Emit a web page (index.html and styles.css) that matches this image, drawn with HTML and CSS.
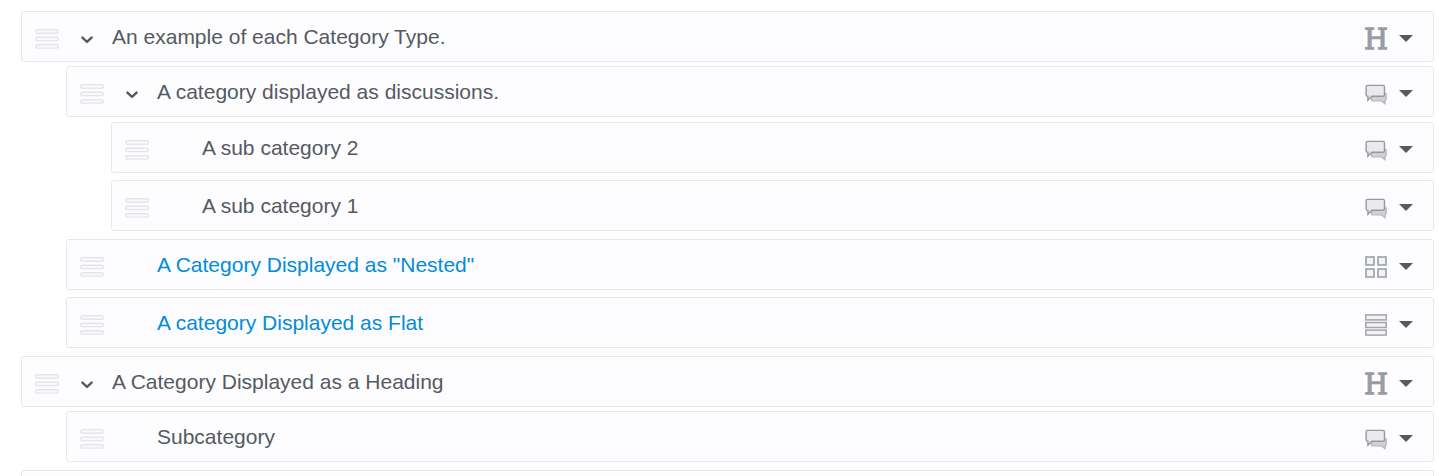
FILE: index.html
```
<!DOCTYPE html>
<html lang="en">
<head>
<meta charset="utf-8">
<title>Categories</title>
<link rel="stylesheet" href="styles.css">
</head>
<body>
<svg class="defs" aria-hidden="true">
  <symbol id="handle" viewBox="0 0 24 20"><g fill="#fafafc" stroke="#e4e5e8" stroke-width="1.4"><rect x=".7" y=".8" width="22.6" height="3.4" rx="1.5"/><rect x=".7" y="8.2" width="22.6" height="3.4" rx="1.5"/><rect x=".7" y="15.7" width="22.6" height="3.4" rx="1.5"/></g></symbol>
  <symbol id="chevron" viewBox="0 0 12 8"><path d="M1.4 1.6 6 5.9 10.6 1.6" fill="none" stroke="#555a62" stroke-width="2.4" stroke-linecap="round" stroke-linejoin="round"/></symbol>
  <symbol id="caret" viewBox="0 0 14 7"><path d="M0 0h14L7 7z" fill="#555a62"/></symbol>
  <symbol id="heading" viewBox="0 0 22 22"><text class="heading-letter" x="-.8" y="21" textLength="23.6" lengthAdjust="spacingAndGlyphs">H</text></symbol>
  <symbol id="discussions" viewBox="0 0 22 22"><path d="M8 10H20q1.2 0 1.2 1.2v5q0 1.2-1.2 1.4v3.2L16.6 18H8q-1.7 0-1.7-1.6z" fill="#cfd0d3" stroke="#b4b6ba" stroke-width="1.2"/><path d="M2.6 2.4H18q1.5 0 1.5 1.5v7.9q0 1.5-1.5 1.5H6.8L2.9 17.3V13.3Q1.1 13.3 1.1 11.8V3.9Q1.1 2.4 2.6 2.4z" fill="#e9eaed" stroke="#959aa2" stroke-width="1.4"/></symbol>
  <symbol id="nested" viewBox="0 0 22 22"><g fill="#f2f3f5" stroke="#a2a5ab" stroke-width="1.7"><rect x="1" y="1" width="8" height="8"/><rect x="13" y="1" width="8" height="8"/><rect x="1" y="13" width="8" height="8"/><rect x="13" y="13" width="8" height="8"/></g></symbol>
  <symbol id="flat" viewBox="0 0 22 22"><g fill="#f2f3f5" stroke="#a2a5ab" stroke-width="1.5"><rect x=".8" y=".9" width="20.4" height="5"/><rect x=".8" y="8.5" width="20.4" height="5"/><rect x=".8" y="16.1" width="20.4" height="5"/></g></symbol>
</svg>
<main class="tree">
  <div class="row"><svg class="handle"><use href="#handle"/></svg><svg class="chevron"><use href="#chevron"/></svg><span class="name">An example of each Category Type.</span><svg class="type"><use href="#heading"/></svg><svg class="caret"><use href="#caret"/></svg></div>
  <div class="children">
    <div class="row"><svg class="handle"><use href="#handle"/></svg><svg class="chevron"><use href="#chevron"/></svg><span class="name">A category displayed as discussions.</span><svg class="type"><use href="#discussions"/></svg><svg class="caret"><use href="#caret"/></svg></div>
    <div class="children deep">
      <div class="row"><svg class="handle"><use href="#handle"/></svg><span class="chevron"></span><span class="name">A sub category 2</span><svg class="type"><use href="#discussions"/></svg><svg class="caret"><use href="#caret"/></svg></div>
      <div class="row near"><svg class="handle"><use href="#handle"/></svg><span class="chevron"></span><span class="name">A sub category 1</span><svg class="type"><use href="#discussions"/></svg><svg class="caret"><use href="#caret"/></svg></div>
    </div>
    <div class="row far"><svg class="handle"><use href="#handle"/></svg><span class="chevron"></span><a class="name link">A Category Displayed as "Nested"</a><svg class="type"><use href="#nested"/></svg><svg class="caret"><use href="#caret"/></svg></div>
    <div class="row near"><svg class="handle"><use href="#handle"/></svg><span class="chevron"></span><a class="name link">A category Displayed as Flat</a><svg class="type"><use href="#flat"/></svg><svg class="caret"><use href="#caret"/></svg></div>
  </div>
  <div class="row far"><svg class="handle"><use href="#handle"/></svg><svg class="chevron"><use href="#chevron"/></svg><span class="name">A Category Displayed as a Heading</span><svg class="type"><use href="#heading"/></svg><svg class="caret"><use href="#caret"/></svg></div>
  <div class="children">
    <div class="row"><svg class="handle"><use href="#handle"/></svg><span class="chevron"></span><span class="name">Subcategory</span><svg class="type"><use href="#discussions"/></svg><svg class="caret"><use href="#caret"/></svg></div>
  </div>
  <div class="row far partial"></div>
</main>
</body>
</html>
```
FILE: styles.css
```
* { box-sizing: border-box; }
body {
  margin: 0;
  background: #fff;
  color: #555a62;
  font-family: "Liberation Sans", Arial, sans-serif;
  font-size: 21px;
}
.defs { display: none; }
.tree { padding: 11px 5px 0 21px; }
.children { margin: 4px 0 0 45px; }
.deep { margin-top: 5px; }
.row {
  display: flex;
  align-items: flex-start;
  height: 51px;
  padding: 0 20px 0 13px;
  border: 1px solid #e7e8ea;
  border-radius: 3px;
  background: #fdfdff;
}
.near { margin-top: 7px; }
.far { margin-top: 8px; }
.partial { height: 6px; border-bottom: 0; border-radius: 3px 3px 0 0; }
.handle { width: 24px; height: 20px; margin-top: 17px; }
.chevron { width: 12px; height: 8px; margin: 24px 19px 0 22px; }
.name { flex: 1; line-height: 24px; margin-top: 13px; white-space: nowrap; }
.link { color: #038bdb; }
.type { width: 22px; height: 22px; margin-top: 16px; overflow: visible; }
#heading { overflow: visible; }
.caret { width: 14px; height: 7px; margin: 23px 0 0 12px; }
.heading-letter {
  font: 27px "DejaVu Serif", serif;
  fill: #999ca3;
  stroke: #999ca3;
  stroke-width: 1.3;
}
```
